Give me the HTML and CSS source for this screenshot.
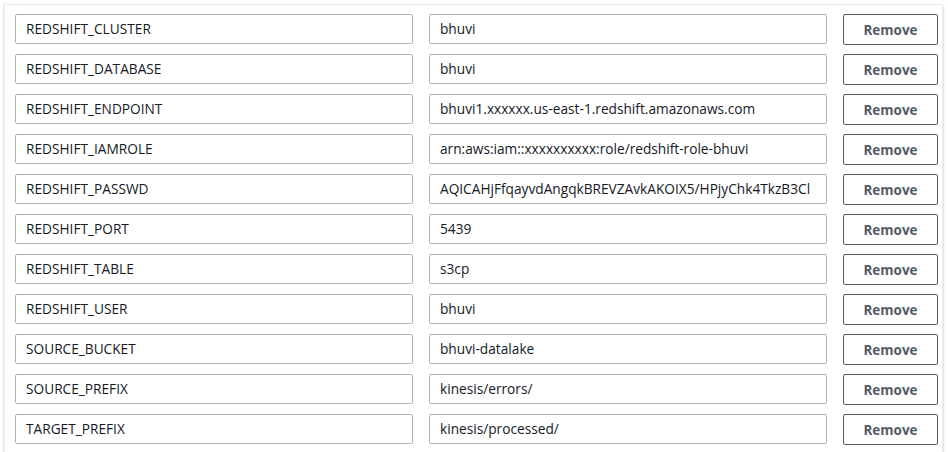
FILE: index.html
```html
<!DOCTYPE html>
<html>
<head>
<meta charset="utf-8">
<link rel="stylesheet" href="styles.css">
</head>
<body>
<div class="panel">
  <div class="row"><div class="field">REDSHIFT_CLUSTER</div><div class="field">bhuvi</div><button class="btn">Remove</button></div>
  <div class="row"><div class="field">REDSHIFT_DATABASE</div><div class="field">bhuvi</div><button class="btn">Remove</button></div>
  <div class="row"><div class="field">REDSHIFT_ENDPOINT</div><div class="field">bhuvi1.xxxxxx.us-east-1.redshift.amazonaws.com</div><button class="btn">Remove</button></div>
  <div class="row"><div class="field">REDSHIFT_IAMROLE</div><div class="field">arn:aws:iam::xxxxxxxxxx:role/redshift-role-bhuvi</div><button class="btn">Remove</button></div>
  <div class="row"><div class="field">REDSHIFT_PASSWD</div><div class="field">AQICAHjFfqayvdAngqkBREVZAvkAKOIX5/HPjyChk4TkzB3Cl</div><button class="btn">Remove</button></div>
  <div class="row"><div class="field">REDSHIFT_PORT</div><div class="field">5439</div><button class="btn">Remove</button></div>
  <div class="row"><div class="field">REDSHIFT_TABLE</div><div class="field">s3cp</div><button class="btn">Remove</button></div>
  <div class="row"><div class="field">REDSHIFT_USER</div><div class="field">bhuvi</div><button class="btn">Remove</button></div>
  <div class="row"><div class="field">SOURCE_BUCKET</div><div class="field">bhuvi-datalake</div><button class="btn">Remove</button></div>
  <div class="row"><div class="field">SOURCE_PREFIX</div><div class="field">kinesis/errors/</div><button class="btn">Remove</button></div>
  <div class="row"><div class="field">TARGET_PREFIX</div><div class="field">kinesis/processed/</div><button class="btn">Remove</button></div>
</div>
</body>
</html>
```
FILE: styles.css
```css
html, body {
  margin: 0;
  padding: 0;
  background: #ffffff;
}
body {
  padding: 4px 4px 0 4px;
  font-family: "Open Sans", "Noto Sans", sans-serif;
  color: #16191f;
}
.panel {
  border: 1px solid #eaeded;
  box-shadow: 0 1px 2px rgba(0, 28, 36, 0.3);
  padding: 9px 4px 9px 10px;
  display: flex;
  flex-direction: column;
  gap: 10px;
  width: 923px;
}
.row {
  display: grid;
  grid-template-columns: 398px 398px 95px;
  column-gap: 16px;
  height: 30px;
}
.field {
  box-sizing: border-box;
  height: 30px;
  border: 1px solid #aab7b8;
  border-radius: 2px;
  padding: 0 10px;
  font-size: 13.7px;
  line-height: 28px;
  white-space: nowrap;
  overflow: hidden;
}
.btn {
  box-sizing: border-box;
  height: 31px;
  border: 1px solid #545b64;
  border-radius: 2px;
  background: #ffffff;
  color: #545b64;
  font-family: "Open Sans", "Noto Sans", sans-serif;
  font-weight: 700;
  font-size: 13.5px;
  padding: 0;
  cursor: pointer;
}
```
